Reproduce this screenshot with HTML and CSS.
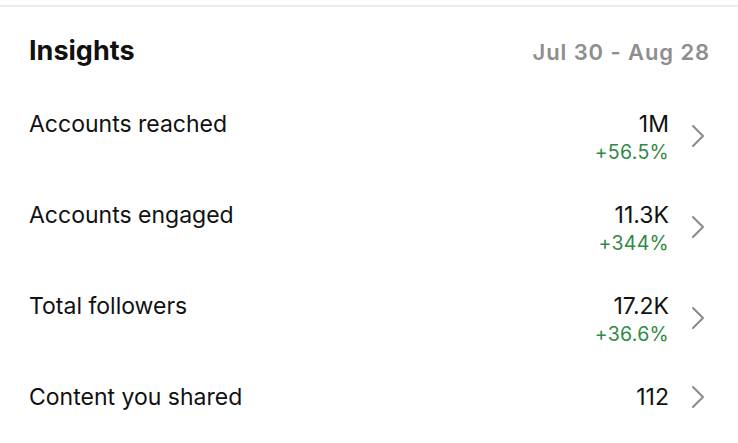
FILE: index.html
```html
<!DOCTYPE html>
<html>
<head>
<meta charset="utf-8">
<link rel="stylesheet" href="styles.css">
</head>
<body>
<div class="page">
  <div class="divider"></div>
  <section class="insights">
    <header class="head">
      <h1 class="title">Insights</h1>
      <span class="range">Jul 30 - Aug 28</span>
    </header>
    <div class="row">
      <span class="label">Accounts reached</span>
      <div class="right">
        <div class="vals"><span class="val">1M</span><span class="pct">+56.5%</span></div>
        <svg class="chev" viewBox="0 0 14 24" width="14" height="24"><path d="M2 2 L12 12 L2 22" fill="none" stroke="#8a8a8a" stroke-width="2" stroke-linecap="round" stroke-linejoin="round"/></svg>
      </div>
    </div>
    <div class="row">
      <span class="label">Accounts engaged</span>
      <div class="right">
        <div class="vals"><span class="val">11.3K</span><span class="pct">+344%</span></div>
        <svg class="chev" viewBox="0 0 14 24" width="14" height="24"><path d="M2 2 L12 12 L2 22" fill="none" stroke="#8a8a8a" stroke-width="2" stroke-linecap="round" stroke-linejoin="round"/></svg>
      </div>
    </div>
    <div class="row">
      <span class="label">Total followers</span>
      <div class="right">
        <div class="vals"><span class="val">17.2K</span><span class="pct">+36.6%</span></div>
        <svg class="chev" viewBox="0 0 14 24" width="14" height="24"><path d="M2 2 L12 12 L2 22" fill="none" stroke="#8a8a8a" stroke-width="2" stroke-linecap="round" stroke-linejoin="round"/></svg>
      </div>
    </div>
    <div class="row">
      <span class="label">Content you shared</span>
      <div class="right">
        <div class="vals"><span class="val">112</span></div>
        <svg class="chev" viewBox="0 0 14 24" width="14" height="24"><path d="M2 2 L12 12 L2 22" fill="none" stroke="#8a8a8a" stroke-width="2" stroke-linecap="round" stroke-linejoin="round"/></svg>
      </div>
    </div>
  </section>
</div>
</body>
</html>
```
FILE: styles.css
```css
* { box-sizing: border-box; }
html, body { margin: 0; padding: 0; background: #fff; }
body { font-family: Inter, "Noto Sans", "Liberation Sans", sans-serif; color: #111; }
.page { width: 738px; height: 443px; overflow: hidden; padding-top: 5px; }
.divider { height: 2px; background: #ececec; }
.insights { padding: 0 33px 0 29px; }
.head { display: flex; justify-content: space-between; align-items: baseline; margin-top: 27px; height: 36px; }
.title { margin: 0; font-size: 27px; font-weight: 700; letter-spacing: 0; }
.range { font-size: 22px; font-weight: 600; color: #8e8e8e; letter-spacing: 0.9px; margin-right: -5px; }
.row { display: flex; justify-content: space-between; align-items: flex-start; height: 91px; }
.head + .row { margin-top: 39px; }
.label { font-size: 23px; line-height: 30px; }
.right { display: flex; align-items: center; gap: 22px; }
.vals { display: flex; flex-direction: column; align-items: flex-end; }
.val { font-size: 23px; line-height: 30px; }
.pct { font-size: 19.5px; line-height: 22px; margin-top: 2px; color: #2f8a43; letter-spacing: 0.3px; }
.chev { display: block; }
```
